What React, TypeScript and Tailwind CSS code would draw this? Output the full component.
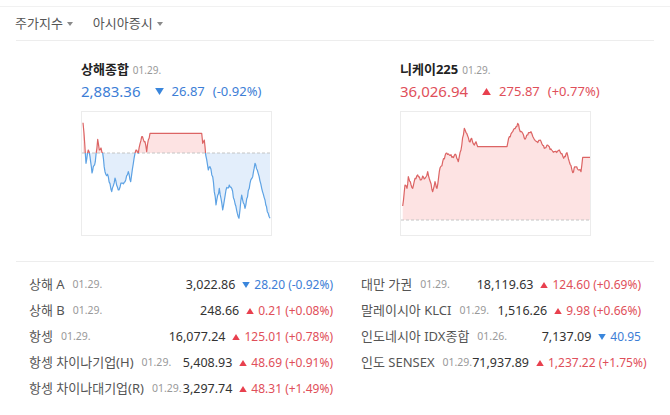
import React from "react";

type Pt = [number, number];

const FONT = "font-['Noto_Sans','Noto_Sans_CJK_KR',sans-serif]";
const RED = "#df4f5a";
const BLUE = "#3d7ed6";

// Key points traced from the reference; jitter fills in the jagged ticks
const shanghaiKeys: Pt[] = [
  [1, 10.7], [2, 21.3], [4, 51.3], [6.3, 38], [8, 44.7], [10, 61], [11.3, 54.7], [13.3, 49.7],
  [15.7, 27.3], [17.3, 38], [19, 36], [20.7, 41.3], [23, 59.7], [26.3, 64.7], [29.7, 79.7],
  [33, 66], [36.3, 78], [39.7, 71], [43, 69.7], [46.3, 59.7], [48.7, 69.7], [53, 41.3], [54, 38],
  [56.3, 41.3], [59.7, 24.7], [63, 29.7], [64.7, 39.7], [66.3, 28], [68, 21.3], [119.7, 21.3],
  [120.7, 31.3], [122.3, 28], [123.7, 43], [126.3, 58], [128, 54.7], [130.7, 64.7], [134, 93],
  [137.3, 76.3], [140.7, 98], [144, 78], [147.3, 73], [149.7, 76.3], [152.3, 88], [157, 106.3],
  [159.7, 83], [163, 96.3], [168, 71.3], [170.7, 64.7], [173, 51.3], [175.3, 58], [179.7, 76.3],
  [183, 88], [185.3, 99.7], [188, 106.3],
];

const nikkeiKeys: Pt[] = [
  [1.7, 94], [4, 73], [6, 76.3], [7.3, 64.7], [9.3, 69.7], [11.7, 76.3], [14, 66.3], [16.7, 63],
  [19.3, 68], [21.7, 64], [24, 66.3], [26.7, 59.7], [29.3, 69.7], [31.7, 79.7], [34, 69.7],
  [36, 76.3], [38.3, 59.7], [41.7, 49.7], [45, 41.3], [48.3, 43], [51.7, 44.7], [55, 43],
  [57.3, 49.7], [60, 38], [63.3, 16.3], [65.7, 21.3], [68.3, 29.7], [70.7, 26.3], [73.3, 33],
  [75, 29.7], [76.7, 34.7], [106, 34.7], [108.3, 24.7], [111.7, 19.7], [115, 14.7], [116.7, 11.3],
  [119.3, 19.7], [121.7, 21.3], [124, 27.3], [126.7, 23], [130, 19.7], [132.7, 26.3], [136, 29.7],
  [139.3, 28], [143.3, 36.3], [146.7, 33], [150.7, 38], [154, 39.7], [158.3, 38], [162.7, 46.3],
  [166, 40.7], [168.3, 49.7], [171.7, 60.7], [174, 54.7], [177.3, 58], [180, 59.7], [181.7, 45.3],
  [189.3, 45.3],
];

function series(keys: Pt[], seed: number): Pt[] {
  const rand = (i: number) => {
    const v = Math.sin(i * 12.9898 + seed) * 43758.5453;
    return v - Math.floor(v);
  };
  const pts: Pt[] = [];
  let idx = 0;
  for (let k = 0; k < keys.length - 1; k++) {
    const [x0, y0] = keys[k];
    const [x1, y1] = keys[k + 1];
    const flat = y0 === y1;
    const n = Math.max(1, Math.round((x1 - x0) / 0.8));
    for (let j = 0; j < n; j++) {
      const t = j / n;
      const noise = flat || j === 0 ? 0 : (rand(idx++) - 0.5) * 3.2;
      pts.push([x0 + (x1 - x0) * t, y0 + (y1 - y0) * t + noise]);
    }
  }
  pts.push(keys[keys.length - 1]);
  return pts;
}

function Chart({ id, keys, seed, base, w, h }: { id: string; keys: Pt[]; seed: number; base: number; w: number; h: number }) {
  const pts = series(keys, seed);
  const line = pts.map(([x, y]) => `${x.toFixed(1)},${y.toFixed(1)}`).join(" ");
  const area = `${pts[0][0]},${base} ${line} ${pts[pts.length - 1][0]},${base}`;
  return (
    <div className="w-[191px] h-[125px] border border-[#ececec] bg-white">
      <svg width={w} height={h} viewBox={`0 0 ${w} ${h}`} className="block">
        <defs>
          <clipPath id={`${id}-up`}>
            <rect x="0" y="0" width={w} height={base} />
          </clipPath>
          <clipPath id={`${id}-down`}>
            <rect x="0" y={base} width={w} height={h - base} />
          </clipPath>
        </defs>
        <polygon points={area} fill="#fde3e3" clipPath={`url(#${id}-up)`} />
        <polygon points={area} fill="#e3eefb" clipPath={`url(#${id}-down)`} />
        <line x1="0" x2={w} y1={base} y2={base} stroke="#c4c4c4" strokeWidth="1" strokeDasharray="3 2" />
        <polyline points={line} fill="none" stroke="#dc6464" strokeWidth="1.2" strokeLinejoin="round" clipPath={`url(#${id}-up)`} />
        <polyline points={line} fill="none" stroke="#5da2e4" strokeWidth="1.2" strokeLinejoin="round" clipPath={`url(#${id}-down)`} />
      </svg>
    </div>
  );
}

function Tri({ up, size = 8 }: { up: boolean; size?: number }) {
  const h = Math.round(size * 0.8);
  return (
    <svg width={size} height={h} viewBox="0 0 10 8" className="shrink-0">
      {up ? <polygon points="5,0 10,8 0,8" fill="#e8404e" /> : <polygon points="0,0 10,0 5,8" fill="#3a86dc" />}
    </svg>
  );
}

function Caret() {
  return (
    <svg width="6" height="4" viewBox="0 0 6 4" className="ml-[4px] mt-[1px]">
      <polygon points="0,0 6,0 3,4" fill="#8a8a8a" />
    </svg>
  );
}

interface Row {
  name: string;
  date: string;
  value: string;
  up: boolean;
  change: string;
}

const leftRows: Row[] = [
  { name: "상해 A", date: "01.29.", value: "3,022.86", up: false, change: "28.20 (-0.92%)" },
  { name: "상해 B", date: "01.29.", value: "248.66", up: true, change: "0.21 (+0.08%)" },
  { name: "항셍", date: "01.29.", value: "16,077.24", up: true, change: "125.01 (+0.78%)" },
  { name: "항셍 차이나기업(H)", date: "01.29.", value: "5,408.93", up: true, change: "48.69 (+0.91%)" },
  { name: "항셍 차이나대기업(R)", date: "01.29.", value: "3,297.74", up: true, change: "48.31 (+1.49%)" },
];

const rightRows: Row[] = [
  { name: "대만 가권", date: "01.29.", value: "18,119.63", up: true, change: "124.60 (+0.69%)" },
  { name: "말레이시아 KLCI", date: "01.29.", value: "1,516.26", up: true, change: "9.98 (+0.66%)" },
  { name: "인도네시아 IDX종합", date: "01.26.", value: "7,137.09", up: false, change: "40.95" },
  { name: "인도 SENSEX", date: "01.29.", value: "71,937.89", up: true, change: "1,237.22 (+1.75%)" },
];

function TableRow({ row }: { row: Row }) {
  return (
    <div className="flex items-center h-[26px] whitespace-nowrap">
      <span className="text-[13px] text-[#555]">{row.name}</span>
      <span className="ml-[8px] text-[10.5px] text-[#999]">{row.date}</span>
      <span className="flex-1 text-right text-[12.5px] text-[#333]">{row.value}</span>
      <span className="ml-[7px] flex items-center">
        <Tri up={row.up} size={8} />
        <span className="ml-[4px] text-[12px]" style={{ color: row.up ? RED : BLUE }}>
          {row.change}
        </span>
      </span>
    </div>
  );
}

function IndexCard({ title, value, up, diff, pct, children }: { title: string; value: string; up: boolean; diff: string; pct: string; children: React.ReactNode }) {
  const color = up ? RED : BLUE;
  return (
    <div className="pl-[65px]">
      <div className="flex items-baseline leading-[18px]">
        <span className="text-[13px] font-bold text-[#222]">{title}</span>
        <span className="ml-[4px] text-[10px] text-[#999]">01.29.</span>
      </div>
      <div className="mt-[2px] flex items-center leading-[20px]" style={{ color }}>
        <span className="text-[15px]">{value}</span>
        <span className="ml-[14px]">
          <Tri up={up} size={9} />
        </span>
        <span className="ml-[8px] text-[13px]">{diff}</span>
        <span className="ml-[8px] text-[13px]">{pct}</span>
      </div>
      <div className="mt-[10px]">{children}</div>
    </div>
  );
}

export default function App() {
  return (
    <div className={`w-[670px] h-[415px] bg-white pt-[6px] ${FONT}`}>
      <div className="border-t border-[#f1f1f1]" />
      <div className="mx-[16px] h-[34px] border-b border-[#ededed] flex items-center text-[13px] text-[#555]">
        <span className="flex items-center -ml-[1px]">
          주가지수
          <Caret />
        </span>
        <span className="flex items-center ml-[20px]">
          아시아증시
          <Caret />
        </span>
      </div>

      <div className="mx-[16px] grid grid-cols-2 pt-[19px] pb-[25px] border-b border-[#ededed]">
        <IndexCard title="상해종합" value="2,883.36" up={false} diff="26.87" pct="(-0.92%)">
          <Chart id="sh" keys={shanghaiKeys} seed={3.1} base={41} w={189} h={123} />
        </IndexCard>
        <IndexCard title="니케이225" value="36,026.94" up={true} diff="275.87" pct="(+0.77%)">
          <Chart id="nk" keys={nikkeiKeys} seed={7.7} base={108} w={189} h={123} />
        </IndexCard>
      </div>

      <div className="flex pl-[29px] pt-[10px]">
        <div className="w-[304px]">
          {leftRows.map((r) => (
            <TableRow key={r.name} row={r} />
          ))}
        </div>
        <div className="w-[280px] ml-[28px]">
          {rightRows.map((r) => (
            <TableRow key={r.name} row={r} />
          ))}
        </div>
      </div>
    </div>
  );
}
